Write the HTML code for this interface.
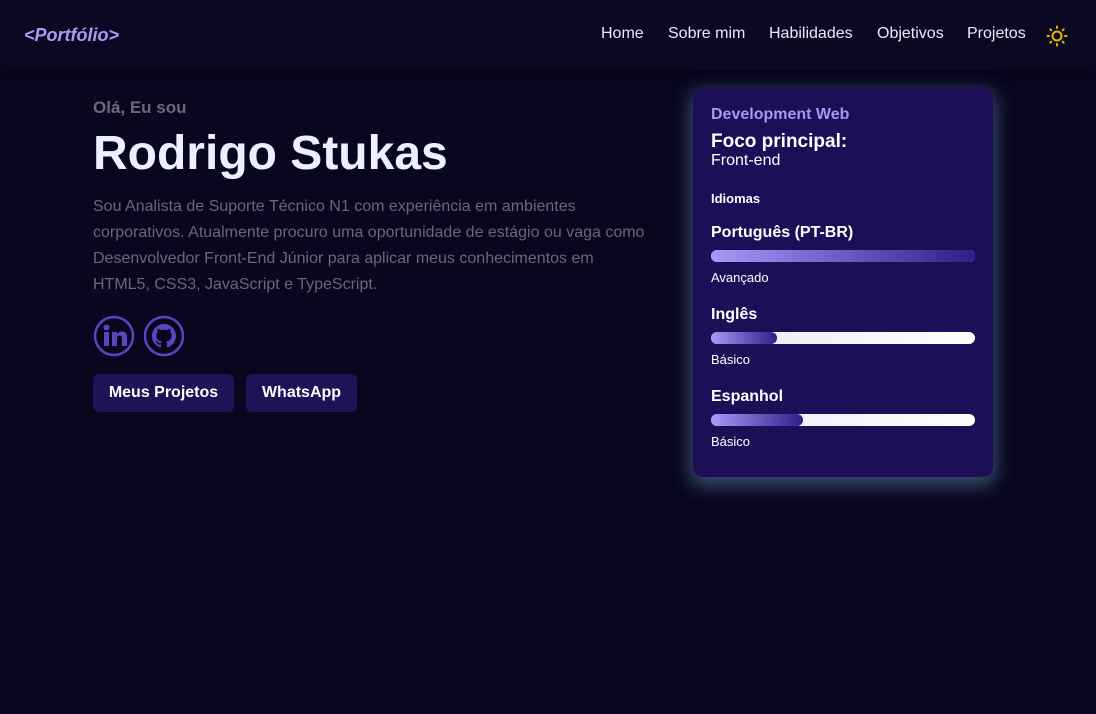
<!DOCTYPE html>
<html><head><meta charset="utf-8"><style>
*{margin:0;padding:0;box-sizing:border-box}
body{width:1096px;height:714px;background:#090620;font-family:"Liberation Sans",sans-serif;position:relative;overflow:hidden;color:#fff}
.hdr{position:absolute;left:0;top:0;width:1096px;height:71px;background:#0b0823;box-shadow:0 2px 6px rgba(0,0,0,.5)}
.logo{position:absolute;left:24px;top:25px;font-size:18px;font-weight:bold;font-style:italic;color:#a89af5}
.nav{position:absolute;top:25px;font-size:16px;color:#eceaf5}
.a{position:absolute}
.btn{position:absolute;top:374px;height:38px;background:#1d1357;border-radius:6px;font-weight:bold;font-size:16px;line-height:38px;text-align:center;color:#fff}
.card{position:absolute;left:693px;top:88px;width:300px;height:389px;background:#1c0f58;border-radius:10px;box-shadow:0 6px 18px 3px rgba(100,150,180,.5)}
.bar{position:absolute;left:18px;width:264px;height:12px;border-radius:6px;background:linear-gradient(90deg,#e8eaf8,#fff)}
.fill{height:12px;border-radius:6px;background:linear-gradient(90deg,#a99af7,#2e1e8a)}
.c{position:absolute;left:18px}
</style></head><body>
<div class="hdr">
<div class="logo">&lt;Portfólio&gt;</div>
<div class="nav" style="left:601px">Home</div>
<div class="nav" style="left:668px">Sobre mim</div>
<div class="nav" style="left:769px">Habilidades</div>
<div class="nav" style="left:877px">Objetivos</div>
<div class="nav" style="left:967px">Projetos</div>
<svg class="a" style="left:1046px;top:25px" width="22" height="22" viewBox="0 0 22 22" stroke="#e6b800" stroke-width="2" fill="none" stroke-linecap="round"><circle cx="11" cy="11" r="4.5"/><path d="M11 1.5v1.5M11 19v1.5M1.5 11H3M19 11h1.5M4.3 4.3l1 1M16.7 16.7l1 1M4.3 17.7l1-1M16.7 5.3l1-1"/></svg>
</div>
<div class="a" style="left:93px;top:98px;font-size:17px;font-weight:bold;color:#6d6a78">Olá, Eu sou</div>
<div class="a" style="left:93px;top:126px;font-size:48px;font-weight:bold;color:#eef0ff">Rodrigo Stukas</div>
<div class="a" style="left:93px;top:194px;width:556px;font-size:16px;line-height:26px;color:#6a6778">Sou Analista de Suporte Técnico N1 com experiência em ambientes corporativos. Atualmente procuro uma oportunidade de estágio ou vaga como Desenvolvedor Front-End Júnior para aplicar meus conhecimentos em HTML5, CSS3, JavaScript e TypeScript.</div>
<svg class="a" style="left:93px;top:315px" width="42" height="42" viewBox="0 0 42 42"><circle cx="21" cy="21" r="19" fill="none" stroke="#5a45c0" stroke-width="2.5"/><g fill="#5a45c0"><rect x="11" y="17" width="5" height="14"/><circle cx="13.5" cy="12.5" r="3"/><path d="M19 17h5v2c1-1.5 3-2.5 5-2.5 3.5 0 5 2 5 6V31h-5v-7.5c0-2-.7-3-2.2-3S24 21.5 24 23.5V31h-5z"/></g></svg>
<svg class="a" style="left:143px;top:315px" width="42" height="42" viewBox="0 0 42 42"><circle cx="21" cy="21" r="19" fill="none" stroke="#5a45c0" stroke-width="2.5"/><path fill="#5a45c0" d="M21 9a12 12 0 0 0-3.8 23.4c.6.1.8-.3.8-.6v-2.2c-3.3.7-4-1.4-4-1.4-.6-1.4-1.3-1.8-1.3-1.8-1.1-.7.1-.7.1-.7 1.2.1 1.8 1.2 1.8 1.2 1.1 1.8 2.8 1.3 3.5 1 .1-.8.4-1.3.8-1.6-2.7-.3-5.5-1.3-5.500-5.9 0-1.3.5-2.4 1.2-3.2-.1-.3-.5-1.5.1-3.2 0 0 1-.3 3.3 1.2a11.5 11.5 0 0 1 6 0c2.3-1.5 3.3-1.2 3.3-1.2.7 1.7.2 2.9.1 3.2.8.8 1.2 1.9 1.2 3.2 0 4.6-2.8 5.6-5.5 5.9.4.4.8 1.1.8 2.2v3.3c0 .3.2.7.8.6A12 12 0 0 0 21 9z"/></svg>
<div class="btn" style="left:93px;width:141px">Meus Projetos</div>
<div class="btn" style="left:246px;width:111px">WhatsApp</div>
<div class="card">
<div class="c" style="top:18px;font-size:16px;font-weight:bold;color:#a497f5">Development Web</div>
<div class="c" style="top:43px;font-size:19px;font-weight:bold">Foco principal:</div>
<div class="c" style="top:64px;font-size:16px">Front-end</div>
<div class="c" style="top:103px;font-size:13px;font-weight:bold">Idiomas</div>
<div class="c" style="top:136px;font-size:16px;font-weight:bold">Português (PT-BR)</div>
<div class="bar" style="top:162px"><div class="fill" style="width:264px"></div></div>
<div class="c" style="top:182px;font-size:13px">Avançado</div>
<div class="c" style="top:218px;font-size:16px;font-weight:bold">Inglês</div>
<div class="bar" style="top:244px"><div class="fill" style="width:66px"></div></div>
<div class="c" style="top:264px;font-size:13px">Básico</div>
<div class="c" style="top:300px;font-size:16px;font-weight:bold">Espanhol</div>
<div class="bar" style="top:326px"><div class="fill" style="width:92px"></div></div>
<div class="c" style="top:346px;font-size:13px">Básico</div>
</div>
</body></html>
